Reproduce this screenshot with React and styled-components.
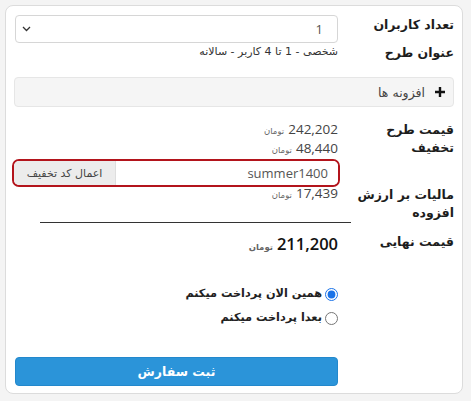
import React from "react"
import styled, { createGlobalStyle } from "styled-components"

const GlobalStyle = createGlobalStyle`
  html, body {
    margin: 0;
    background: #f4f4f4;
  }
  body {
    padding: 5px 8px 6px 5px;
    font-family: "Open Sans", "DejaVu Sans", sans-serif;
    color: #222;
  }
`

const arabic = `"DejaVu Sans", "Open Sans", sans-serif`

const Card = styled.div`
  direction: rtl;
  width: 458px;
  box-sizing: border-box;
  background: #fff;
  border: 1px solid #dcdcdc;
  border-radius: 8px;
  padding: 9px 8px 7px 9px;
`

const Row = styled.div`
  display: grid;
  grid-template-columns: 1fr 323px;
  column-gap: 10px;
  align-items: start;
  margin-top: ${(p) => p.$top || 0}px;
`

const Label = styled.div`
  font-family: ${arabic};
  font-size: 12.5px;
  font-weight: 700;
  line-height: 18px;
  color: #1d1d1d;
  padding-top: ${(p) => p.$pad || 0}px;
`

const Value = styled.div`
  font-family: ${arabic};
  font-size: 11px;
  line-height: 18px;
  color: #333;
`

const SelectBox = styled.div`
  display: flex;
  align-items: center;
  justify-content: space-between;
  height: 28px;
  box-sizing: border-box;
  border: 1px solid #d6d6d6;
  border-radius: 4px;
  padding: 0 14px 0 6px;
  font-size: 13px;
  color: #555;
`

const AddonsBar = styled.div`
  display: flex;
  align-items: center;
  gap: 10px;
  margin: 15px 0 0 -1px;
  height: 30px;
  box-sizing: border-box;
  padding: 0 8px;
  background: #f5f5f5;
  border: 1px solid #e6e6e6;
  border-radius: 4px;
  font-family: ${arabic};
  font-size: 12.5px;
  color: #444;
`

const Price = styled.div`
  display: flex;
  align-items: baseline;
  gap: 4px;
  height: ${(p) => (p.$big ? 22 : 18)}px;
  font-size: ${(p) => (p.$big ? 16.5 : 13.5)}px;
  font-weight: ${(p) => (p.$big ? 600 : 400)};
  line-height: ${(p) => (p.$big ? 22 : 18)}px;
  color: ${(p) => (p.$big ? "#111" : "#444")};
`

const Unit = styled.span`
  font-family: ${arabic};
  font-size: 8.5px;
  color: #666;
`

const CouponGroup = styled.div`
  display: flex;
  height: 28px;
  box-sizing: border-box;
  margin: 2px -2px -3px -3px;
  border: 2px solid #b3141c;
  border-radius: 7px;
  overflow: hidden;
`

const CouponInput = styled.div`
  flex: 1;
  display: flex;
  align-items: center;
  padding: 0 10px;
  font-size: 13px;
  color: #555;
  background: #fff;
`

const CouponButton = styled.div`
  width: 101px;
  display: flex;
  align-items: center;
  justify-content: center;
  background: #ececec;
  border-right: 1px solid #dedede;
  font-family: ${arabic};
  font-size: 11px;
  color: #444;
`

const Divider = styled.hr`
  border: none;
  border-top: 1px solid #333;
  margin: 0 103px 0 25px;
`

const Options = styled.div`
  display: flex;
  flex-direction: column;
  gap: 6px;
  margin-top: 30px;
`

const Option = styled.label`
  display: flex;
  align-items: center;
  gap: 3px;
  font-family: ${arabic};
  font-size: 11.3px;
  font-weight: 700;
  color: #222;
  line-height: 18px;
  input {
    margin: 0;
    width: 13px;
    height: 13px;
    accent-color: #1a73e8;
  }
`

const SubmitButton = styled.button`
  display: block;
  width: 323px;
  height: 29px;
  margin-top: 30px;
  border: 1px solid #2388cc;
  border-radius: 4px;
  background: #2b94d9;
  color: #fff;
  font-family: ${arabic};
  font-size: 12.5px;
  font-weight: 700;
`

const Chevron = () => (
  <svg width="9" height="6" viewBox="0 0 9 6">
    <path d="M1 1l3.5 3.5L8 1" fill="none" stroke="#333" strokeWidth="1.3" />
  </svg>
)

const Plus = () => (
  <svg width="10" height="10" viewBox="0 0 10 10">
    <path d="M5 0v10M0 5h10" stroke="#111" strokeWidth="2.4" />
  </svg>
)

const App = () => (
  <>
    <GlobalStyle />
    <Card>
      <Row>
        <Label $pad={1}>تعداد کاربران</Label>
        <SelectBox>
          <span>1</span>
          <Chevron />
        </SelectBox>
      </Row>
      <Row>
        <Label $pad={1}>عنوان طرح</Label>
        <Value>شخصی - 1 تا 4 کاربر - سالانه</Value>
      </Row>
      <AddonsBar>
        <Plus />
        <span>افزونه ها</span>
      </AddonsBar>
      <Row $top={13}>
        <Label $pad={1}>قیمت طرح</Label>
        <Price>
          <span>242,202</span>
          <Unit>تومان</Unit>
        </Price>
      </Row>
      <Row>
        <Label>تخفیف</Label>
        <div>
          <Price>
            <span>48,440</span>
            <Unit>تومان</Unit>
          </Price>
          <CouponGroup>
            <CouponInput>summer1400</CouponInput>
            <CouponButton>اعمال کد تخفیف</CouponButton>
          </CouponGroup>
        </div>
      </Row>
      <Row>
        <Label $pad={2}>مالیات بر ارزش افزوده</Label>
        <Price>
          <span>17,439</span>
          <Unit>تومان</Unit>
        </Price>
      </Row>
      <Divider />
      <Row $top={10}>
        <Label>قیمت نهایی</Label>
        <Price $big>
          <span>211,200</span>
          <Unit>تومان</Unit>
        </Price>
      </Row>
      <Row>
        <span />
        <Options>
          <Option>
            <input type="radio" name="pay" defaultChecked />
            همین الان پرداخت میکنم
          </Option>
          <Option>
            <input type="radio" name="pay" />
            بعدا پرداخت میکنم
          </Option>
        </Options>
      </Row>
      <Row>
        <span />
        <SubmitButton>ثبت سفارش</SubmitButton>
      </Row>
    </Card>
  </>
)

export default App
